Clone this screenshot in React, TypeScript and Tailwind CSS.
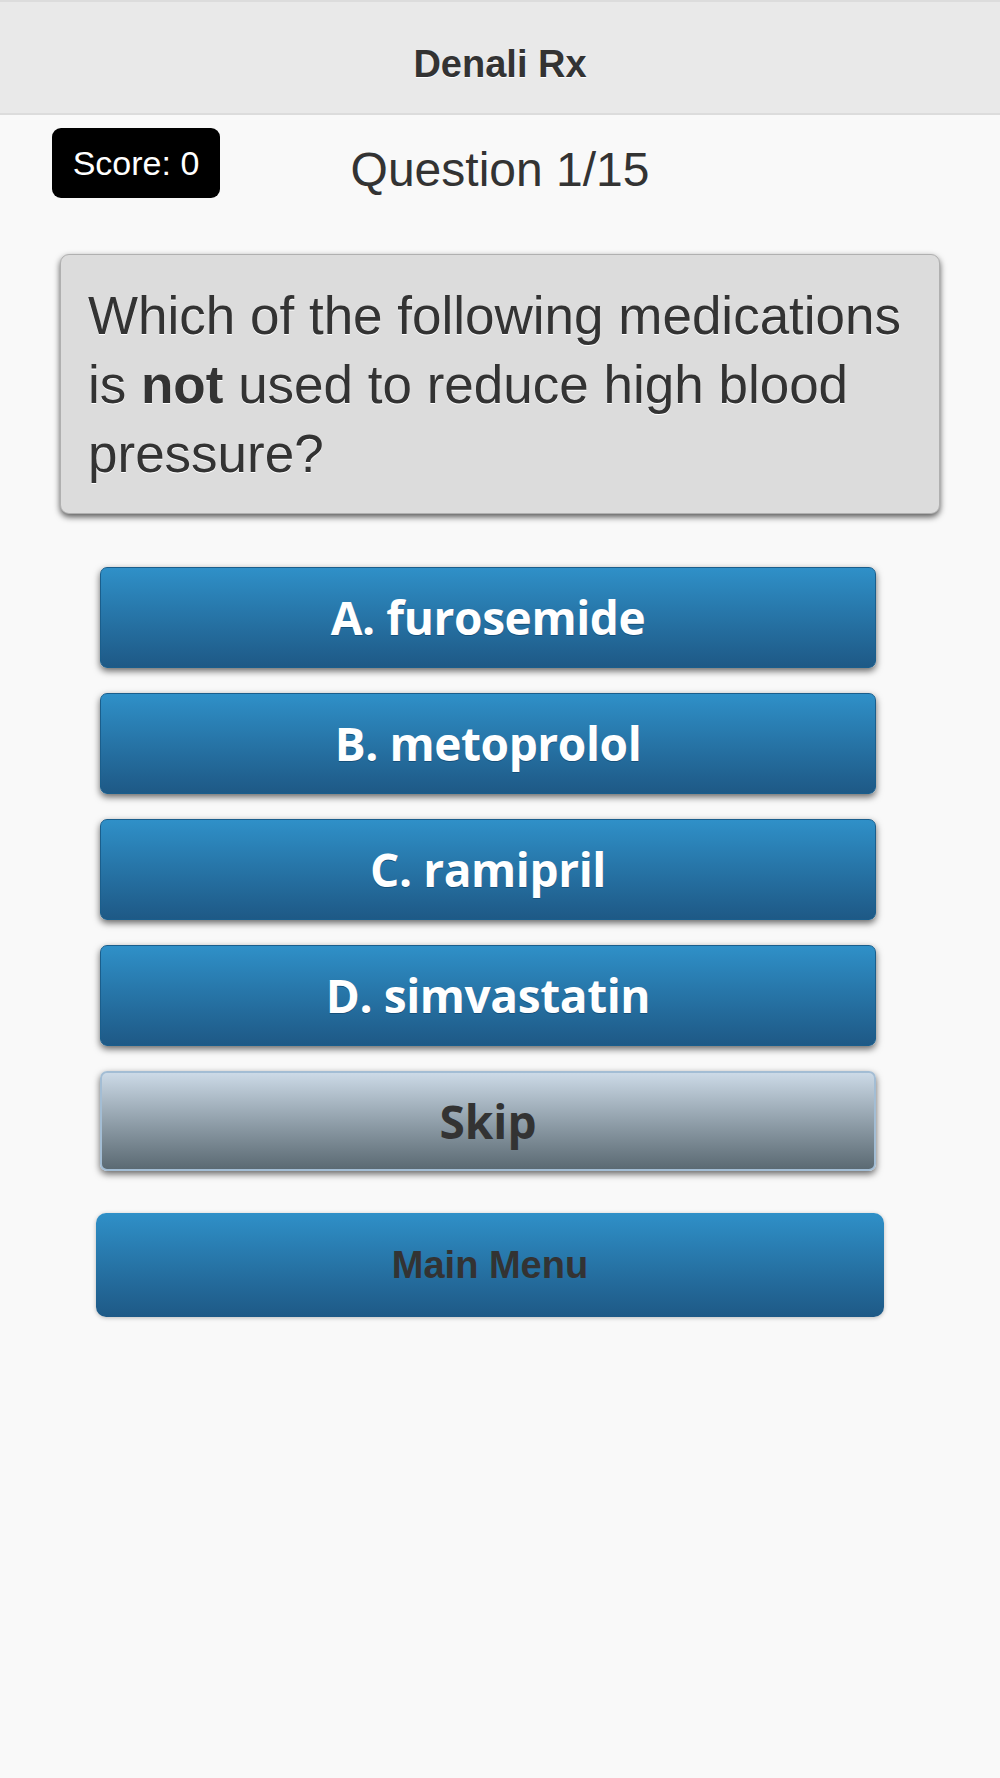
import React from "react";

const answers = ["A. furosemide", "B. metoprolol", "C. ramipril", "D. simvastatin"];

function AnswerButton({ label }: { label: string }) {
  return (
    <button className="w-[776px] h-[101px] rounded-[7px] border border-[#1a5e8c] bg-linear-to-b from-[#2f90c8] to-[#1e5986] shadow-[0_3px_7px_rgba(0,0,0,0.6)] flex items-center justify-center font-['Open_Sans',sans-serif] font-bold text-[46px] tracking-[-0.4px] text-white [text-shadow:0_1px_0_#16507a]">
      {label}
    </button>
  );
}

export default function App() {
  return (
    <div className="min-h-[1778px] bg-[#f9f9f9] font-['Liberation_Sans',Arial,sans-serif] text-[#333]">
      <header className="h-[115px] bg-[#e9e9e9] border-t-2 border-b-2 border-[#dcdcdc] flex items-center justify-center pt-3">
        <h1 className="text-[38px] font-bold leading-none [text-shadow:0_1px_0_#fff]">Denali Rx</h1>
      </header>

      <div className="grid grid-cols-[1fr_auto_1fr] mt-[13px] h-[70px]">
        <div>
          <div className="ml-[52px] w-[168px] h-[70px] rounded-[9px] bg-black text-white text-[34px] flex items-center justify-center">
            Score: 0
          </div>
        </div>
        <div className="mt-[18px] text-[48px] leading-none">Question 1/15</div>
        <div />
      </div>

      <div className="mt-[56px] ml-[60px] w-[880px] rounded-[9px] border border-[#b0b0b0] bg-[#dcdcdc] shadow-[0_3px_6px_rgba(0,0,0,0.65)] pl-[27px] pr-[20px] pt-[26px] pb-[25px]">
        <p className="text-[53px] leading-[69px] [text-shadow:0_1px_0_#fff]">
          Which of the following medications is <b>not</b> used to reduce high blood pressure?
        </p>
      </div>

      <div className="mt-[53px] ml-[100px] flex flex-col gap-[25px]">
        {answers.map((a) => (
          <AnswerButton key={a} label={a} />
        ))}
        <button className="w-[776px] h-[100px] rounded-[7px] border-2 border-[#a3bdd4] bg-linear-to-b from-[#ccdae7] to-[#5b6a73] shadow-[0_3px_7px_rgba(0,0,0,0.6)] flex items-center justify-center font-['Open_Sans',sans-serif] font-bold text-[46px] text-[#333]">
          Skip
        </button>
      </div>

      <button className="mt-[42px] ml-[96px] w-[788px] h-[104px] rounded-[10px] bg-linear-to-b from-[#2f90c8] to-[#1e5986] shadow-[0_1px_4px_rgba(0,0,0,0.25)] flex items-center justify-center text-[38px] font-bold text-[#333]">
        Main Menu
      </button>
    </div>
  );
}
